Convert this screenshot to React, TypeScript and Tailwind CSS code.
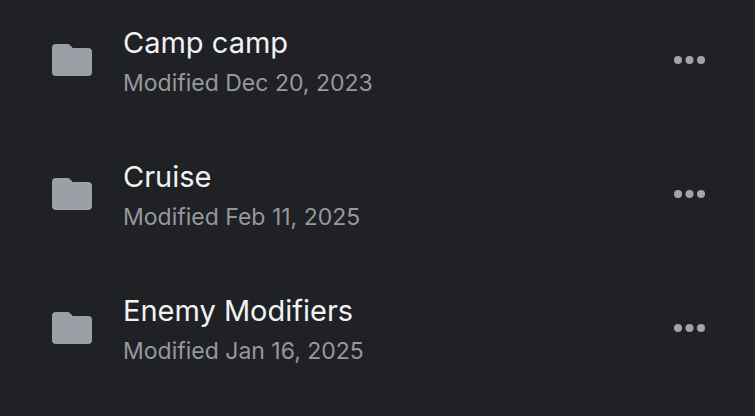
const folders = [
  { name: "Camp camp", modified: "Dec 20, 2023" },
  { name: "Cruise", modified: "Feb 11, 2025" },
  { name: "Enemy Modifiers", modified: "Jan 16, 2025" },
];

function FolderIcon() {
  return (
    <svg viewBox="0 0 40 32" className="h-8 w-10 shrink-0 fill-[#9ba0a6]" aria-hidden="true">
      <path d="M4 0h11.5c1 0 1.7.4 2.4 1.1L20.8 4H36a4 4 0 0 1 4 4v20a4 4 0 0 1-4 4H4a4 4 0 0 1-4-4V4a4 4 0 0 1 4-4z" />
    </svg>
  );
}

function MoreIcon() {
  return (
    <svg viewBox="0 0 32 8" className="h-2 w-8 fill-[#a3a4a8]" aria-hidden="true">
      <circle cx="4" cy="4" r="4" />
      <circle cx="15.5" cy="4" r="4" />
      <circle cx="27" cy="4" r="4" />
    </svg>
  );
}

export default function App() {
  return (
    <main className="min-h-screen bg-[#202125] font-['Inter','Liberation_Sans',sans-serif]">
      <ul className="pt-[23px]">
        {folders.map((folder) => (
          <li key={folder.name} className="flex items-center pr-[49px] pb-15 pl-13">
            <FolderIcon />
            <div className="ml-[31px] min-w-0 flex-1">
              <h2 className="text-[29px] leading-10 text-[#f1f2f4]">{folder.name}</h2>
              <p className="mt-1.5 text-[23px] leading-7 text-[#97989d]">Modified {folder.modified}</p>
            </div>
            <button type="button" className="flex" aria-label={`More options for ${folder.name}`}>
              <MoreIcon />
            </button>
          </li>
        ))}
      </ul>
    </main>
  );
}
